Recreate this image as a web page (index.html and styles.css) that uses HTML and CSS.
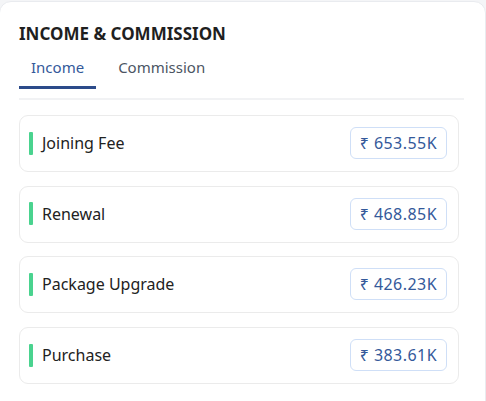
FILE: index.html
```html
<!DOCTYPE html>
<html lang="en">
<head>
<meta charset="utf-8">
<title>Income & Commission</title>
<link rel="stylesheet" href="styles.css">
</head>
<body>
<section class="panel">
  <h2 class="title">INCOME &amp; COMMISSION</h2>
  <nav class="tabs">
    <span class="tab active">Income</span>
    <span class="tab">Commission</span>
  </nav>
  <div class="divider"></div>
  <ul class="list">
    <li class="item"><span class="bar"></span><span class="label">Joining Fee</span><span class="badge">₹ 653.55K</span></li>
    <li class="item"><span class="bar"></span><span class="label">Renewal</span><span class="badge">₹ 468.85K</span></li>
    <li class="item"><span class="bar"></span><span class="label">Package Upgrade</span><span class="badge">₹ 426.23K</span></li>
    <li class="item"><span class="bar"></span><span class="label">Purchase</span><span class="badge">₹ 383.61K</span></li>
  </ul>
</section>
</body>
</html>
```

FILE: styles.css
```css
html, body {
  margin: 0;
  padding: 0;
  background: #f4f5f7;
  font-family: "Noto Sans", "Open Sans", sans-serif;
}
.panel {
  margin: 1px 0 0 -1px;
  background: #ffffff;
  border: 1px solid #e9ebef;
  border-radius: 12px;
  padding: 20px 21px 30px 19px;
}
.title {
  margin: 0;
  font-size: 17px;
  line-height: 24px;
  font-weight: 700;
  color: #1f1f1f;
}
.tabs {
  display: flex;
  gap: 10px;
  margin-top: 9px;
}
.tab {
  padding: 0 12px 7px;
  font-size: 15px;
  line-height: 24px;
  color: #4b5563;
  border-bottom: 3px solid transparent;
}
.tab.active {
  color: #34599a;
  border-bottom-color: #2c4b8a;
}
.divider {
  height: 2px;
  background: #f1f2f4;
  margin-top: 9px;
}
.list {
  list-style: none;
  margin: 15px 5px 0 0;
  padding: 0;
  display: flex;
  flex-direction: column;
  gap: 13.7px;
}
.item {
  display: flex;
  align-items: center;
  border: 1px solid #ebebeb;
  border-radius: 9px;
  padding: 11px 11px 12px 9px;
}
.bar {
  width: 4px;
  height: 23px;
  border-radius: 1px;
  background: #4ad38f;
  margin-right: 9px;
}
.label {
  flex: 1;
  font-size: 16px;
  color: #222222;
}
.badge {
  border: 1px solid #cfdff7;
  border-radius: 6px;
  padding: 0 9px;
  height: 32px;
  box-sizing: border-box;
  display: flex;
  align-items: center;
  font-size: 16px;
  letter-spacing: 0.45px;
  color: #34599a;
}
```
